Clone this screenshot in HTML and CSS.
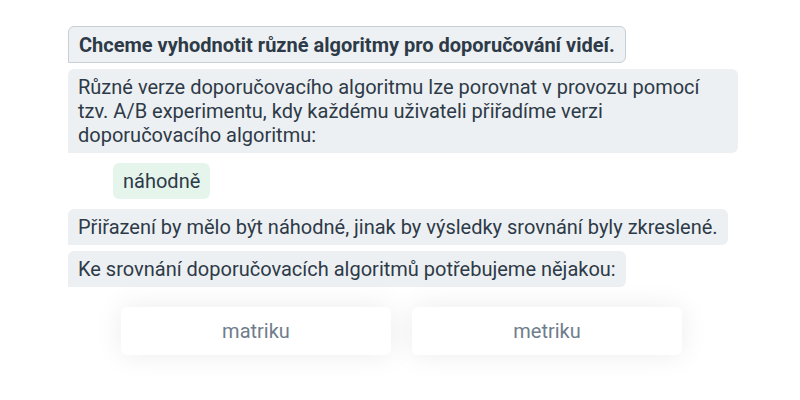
FILE: index.html
```html
<!DOCTYPE html>
<html lang="cs">
<head>
<meta charset="utf-8">
<link rel="stylesheet" href="styles.css">
</head>
<body>
<div class="chat">
  <div class="bubble title">Chceme vyhodnotit různé algoritmy pro doporučování videí.</div>
  <div class="bubble">Různé verze doporučovacího algoritmu lze porovnat v provozu pomocí tzv. A/B experimentu, kdy každému uživateli přiřadíme verzi doporučovacího algoritmu:</div>
  <div class="answer">náhodně</div>
  <div class="bubble">Přiřazení by mělo být náhodné, jinak by výsledky srovnání byly zkreslené.</div>
  <div class="bubble">Ke srovnání doporučovacích algoritmů potřebujeme nějakou:</div>
  <div class="choices">
    <div class="choice">matriku</div>
    <div class="choice">metriku</div>
  </div>
</div>
</body>
</html>
```
FILE: styles.css
```css
html, body {
  margin: 0;
  padding: 0;
  background: #ffffff;
}
body {
  font-family: Roboto, "Liberation Sans", sans-serif;
  font-size: 20px;
  line-height: 24px;
  color: #2d3a48;
}
.chat {
  width: 670px;
  padding: 26px 0 40px 68px;
  display: flex;
  flex-direction: column;
  align-items: flex-start;
}
.bubble {
  background: #edf0f2;
  padding: 6px 10px;
  border-radius: 6px 6px 6px 0;
  margin-bottom: 6px;
}
.title {
  font-weight: 700;
  border: 1px solid #c9cfd4;
  padding: 6px 10px 5px 10px;
  background: #eef1f3;
}
.answer {
  background: #e6f5ec;
  padding: 6px 10px;
  border-radius: 6px;
  margin: 4px 0 10px 45px;
}
.choices {
  margin-top: 14px;
  margin-left: 53px;
  display: flex;
  gap: 21px;
}
.choice {
  width: 270px;
  height: 48px;
  display: flex;
  align-items: center;
  justify-content: center;
  background: #ffffff;
  border-radius: 6px;
  box-shadow: 0 0 28px rgba(0, 0, 0, 0.08);
  color: #6f7d8c;
}
```
